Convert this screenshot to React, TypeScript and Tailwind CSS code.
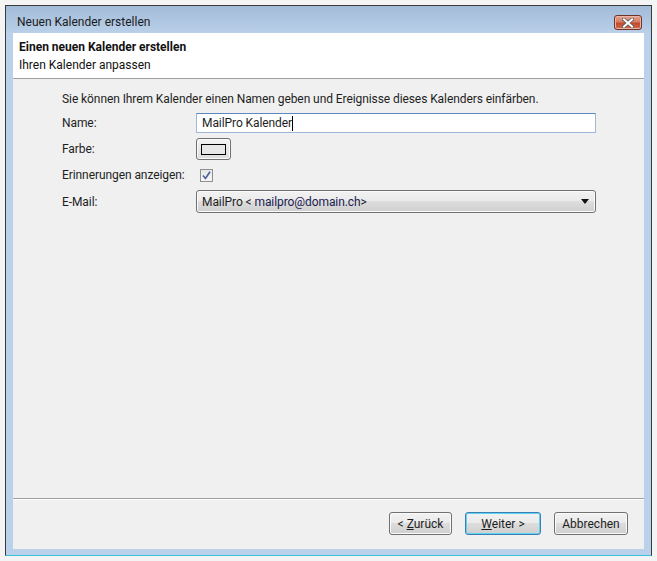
import React from "react";

const font = { fontFamily: "Roboto, 'Noto Sans', sans-serif" };

function WinButton({ children, primary = false, width }: { children: React.ReactNode; primary?: boolean; width: string }) {
    return (
        <button
            className={
                "h-[23px] rounded-[3px] border text-[12px] text-[#1e1e1e] leading-none flex items-center justify-center bg-[linear-gradient(#f2f2f2_0%,#ebebeb_45%,#dddddd_50%,#cfcfcf_100%)] " +
                width +
                (primary
                    ? " border-[#3c7fb1] shadow-[inset_0_0_0_1px_#5fd3f5]"
                    : " border-[#707070] shadow-[inset_0_0_0_1px_#fbfbfb]")
            }
        >
            <span className="whitespace-pre">{children}</span>
        </button>
    );
}

export default function App() {
    return (
        <div className="w-[657px] h-[561px] bg-[#f4f4f5] p-[5px]" style={font}>
            <div className="w-full h-full flex flex-col border border-[#3a3a3a] border-b-[#39c2d7] bg-[#b9d1ea]">
                {/* title bar */}
                <div className="h-[27px] flex items-start justify-between bg-[linear-gradient(#a2bbd8,#bad0e9)] pl-[11px] pr-[9px]">
                    <span className="mt-[9px] text-[12px] leading-[14px] text-[#1b1b1b]">Neuen Kalender erstellen</span>
                    <div className="mt-[9px] w-[28px] h-[15px] rounded-[3px] border border-[#6e3328] bg-[linear-gradient(#e3a393_0%,#d77c64_45%,#c34a2e_55%,#cf6a4c_100%)] flex items-center justify-center shadow-[inset_0_0_0_1px_#eab5a6]">
                        <svg width="12" height="10" viewBox="0 0 12 10">
                            <path d="M2 1.5 L10 8.5 M10 1.5 L2 8.5" stroke="#5a5a5a" strokeWidth="3.6" strokeLinecap="square" />
                            <path d="M2 1.5 L10 8.5 M10 1.5 L2 8.5" stroke="#ffffff" strokeWidth="2" strokeLinecap="square" />
                        </svg>
                    </div>
                </div>

                {/* client area */}
                <div className="flex-1 flex flex-col mx-[7px] bg-[#f0f0f0]">
                    <div className="h-[46px] bg-white border-b border-[#a0a0a0] pl-[6px] pt-[7px]">
                        <div className="text-[12px] leading-[14px] font-bold text-[#111]">Einen neuen Kalender erstellen</div>
                        <div className="mt-[4px] text-[12px] leading-[14px] text-[#111]">Ihren Kalender anpassen</div>
                    </div>

                    <div className="flex-1 pl-[49px] pt-[12px] text-[12px] tracking-[-0.08px] text-[#1e1e1e]">
                        <div className="h-[16px] leading-[16px]">
                            Sie können Ihrem Kalender einen Namen geben und Ereignisse dieses Kalenders einfärben.
                        </div>

                        <div className="mt-[6px] flex items-center h-[20px]">
                            <span className="w-[134px]">Name:</span>
                            <div className="w-[400px] h-[20px] border border-[#9fb8d8] border-t-[#5d88bd] bg-white flex items-center pl-[5px]">
                                MailPro Kalender<span className="inline-block w-px h-[15px] bg-black" />
                            </div>
                        </div>

                        <div className="mt-[5px] flex items-center h-[22px]">
                            <span className="w-[134px]">Farbe:</span>
                            <div className="w-[35px] h-[22px] rounded-[3px] border border-[#707070] bg-[linear-gradient(#f4f4f4,#dcdcdc)] shadow-[inset_0_0_0_1px_#fafafa] flex items-center justify-center">
                                <div className="w-[25px] h-[11px] border border-black bg-[#e7e7e7]" />
                            </div>
                        </div>

                        <div className="mt-[4px] flex items-center h-[22px]">
                            <span className="w-[138px]">Erinnerungen anzeigen:</span>
                            <div className="w-[13px] h-[13px] border border-[#8e8f8f] bg-[linear-gradient(#e6e6e6,#f6f6f6)] flex items-center justify-center">
                                <svg width="9" height="9" viewBox="0 0 9 9">
                                    <path d="M1 4.5 L3.5 7.5 L8 0.8" fill="none" stroke="#4a5e9a" strokeWidth="1.6" />
                                </svg>
                            </div>
                        </div>

                        <div className="mt-[4px] flex items-center h-[23px]">
                            <span className="w-[134px]">E-Mail:</span>
                            <div className="w-[400px] h-[23px] rounded-[3px] border border-[#707070] bg-[linear-gradient(#f2f2f2_0%,#ebebeb_45%,#dddddd_50%,#cfcfcf_100%)] shadow-[inset_0_0_0_1px_#fbfbfb] flex items-center justify-between pl-[5px] pr-[6px]">
                                <span>
                                    MailPro &lt; <span className="text-[#1c1c52]">mailpro@domain.ch</span>&gt;
                                </span>
                                <svg width="8" height="5" viewBox="0 0 8 5">
                                    <path d="M0 0 H8 L4 5 Z" fill="#111" />
                                </svg>
                            </div>
                        </div>
                    </div>

                    <div className="h-[51px] border-t border-[#a0a0a0] shadow-[inset_0_1px_0_#ffffff] flex items-start justify-end gap-[13px] pt-[13px] pr-[16px]">
                        <WinButton width="w-[63px]">
                            {"< "}<span className="underline">Z</span>urück
                        </WinButton>
                        <WinButton width="w-[76px]" primary>
                            <span className="underline">W</span>{"eiter >"}
                        </WinButton>
                        <WinButton width="w-[74px]">Abbrechen</WinButton>
                    </div>
                </div>
                <div className="h-[6px]" />
            </div>
        </div>
    );
}
